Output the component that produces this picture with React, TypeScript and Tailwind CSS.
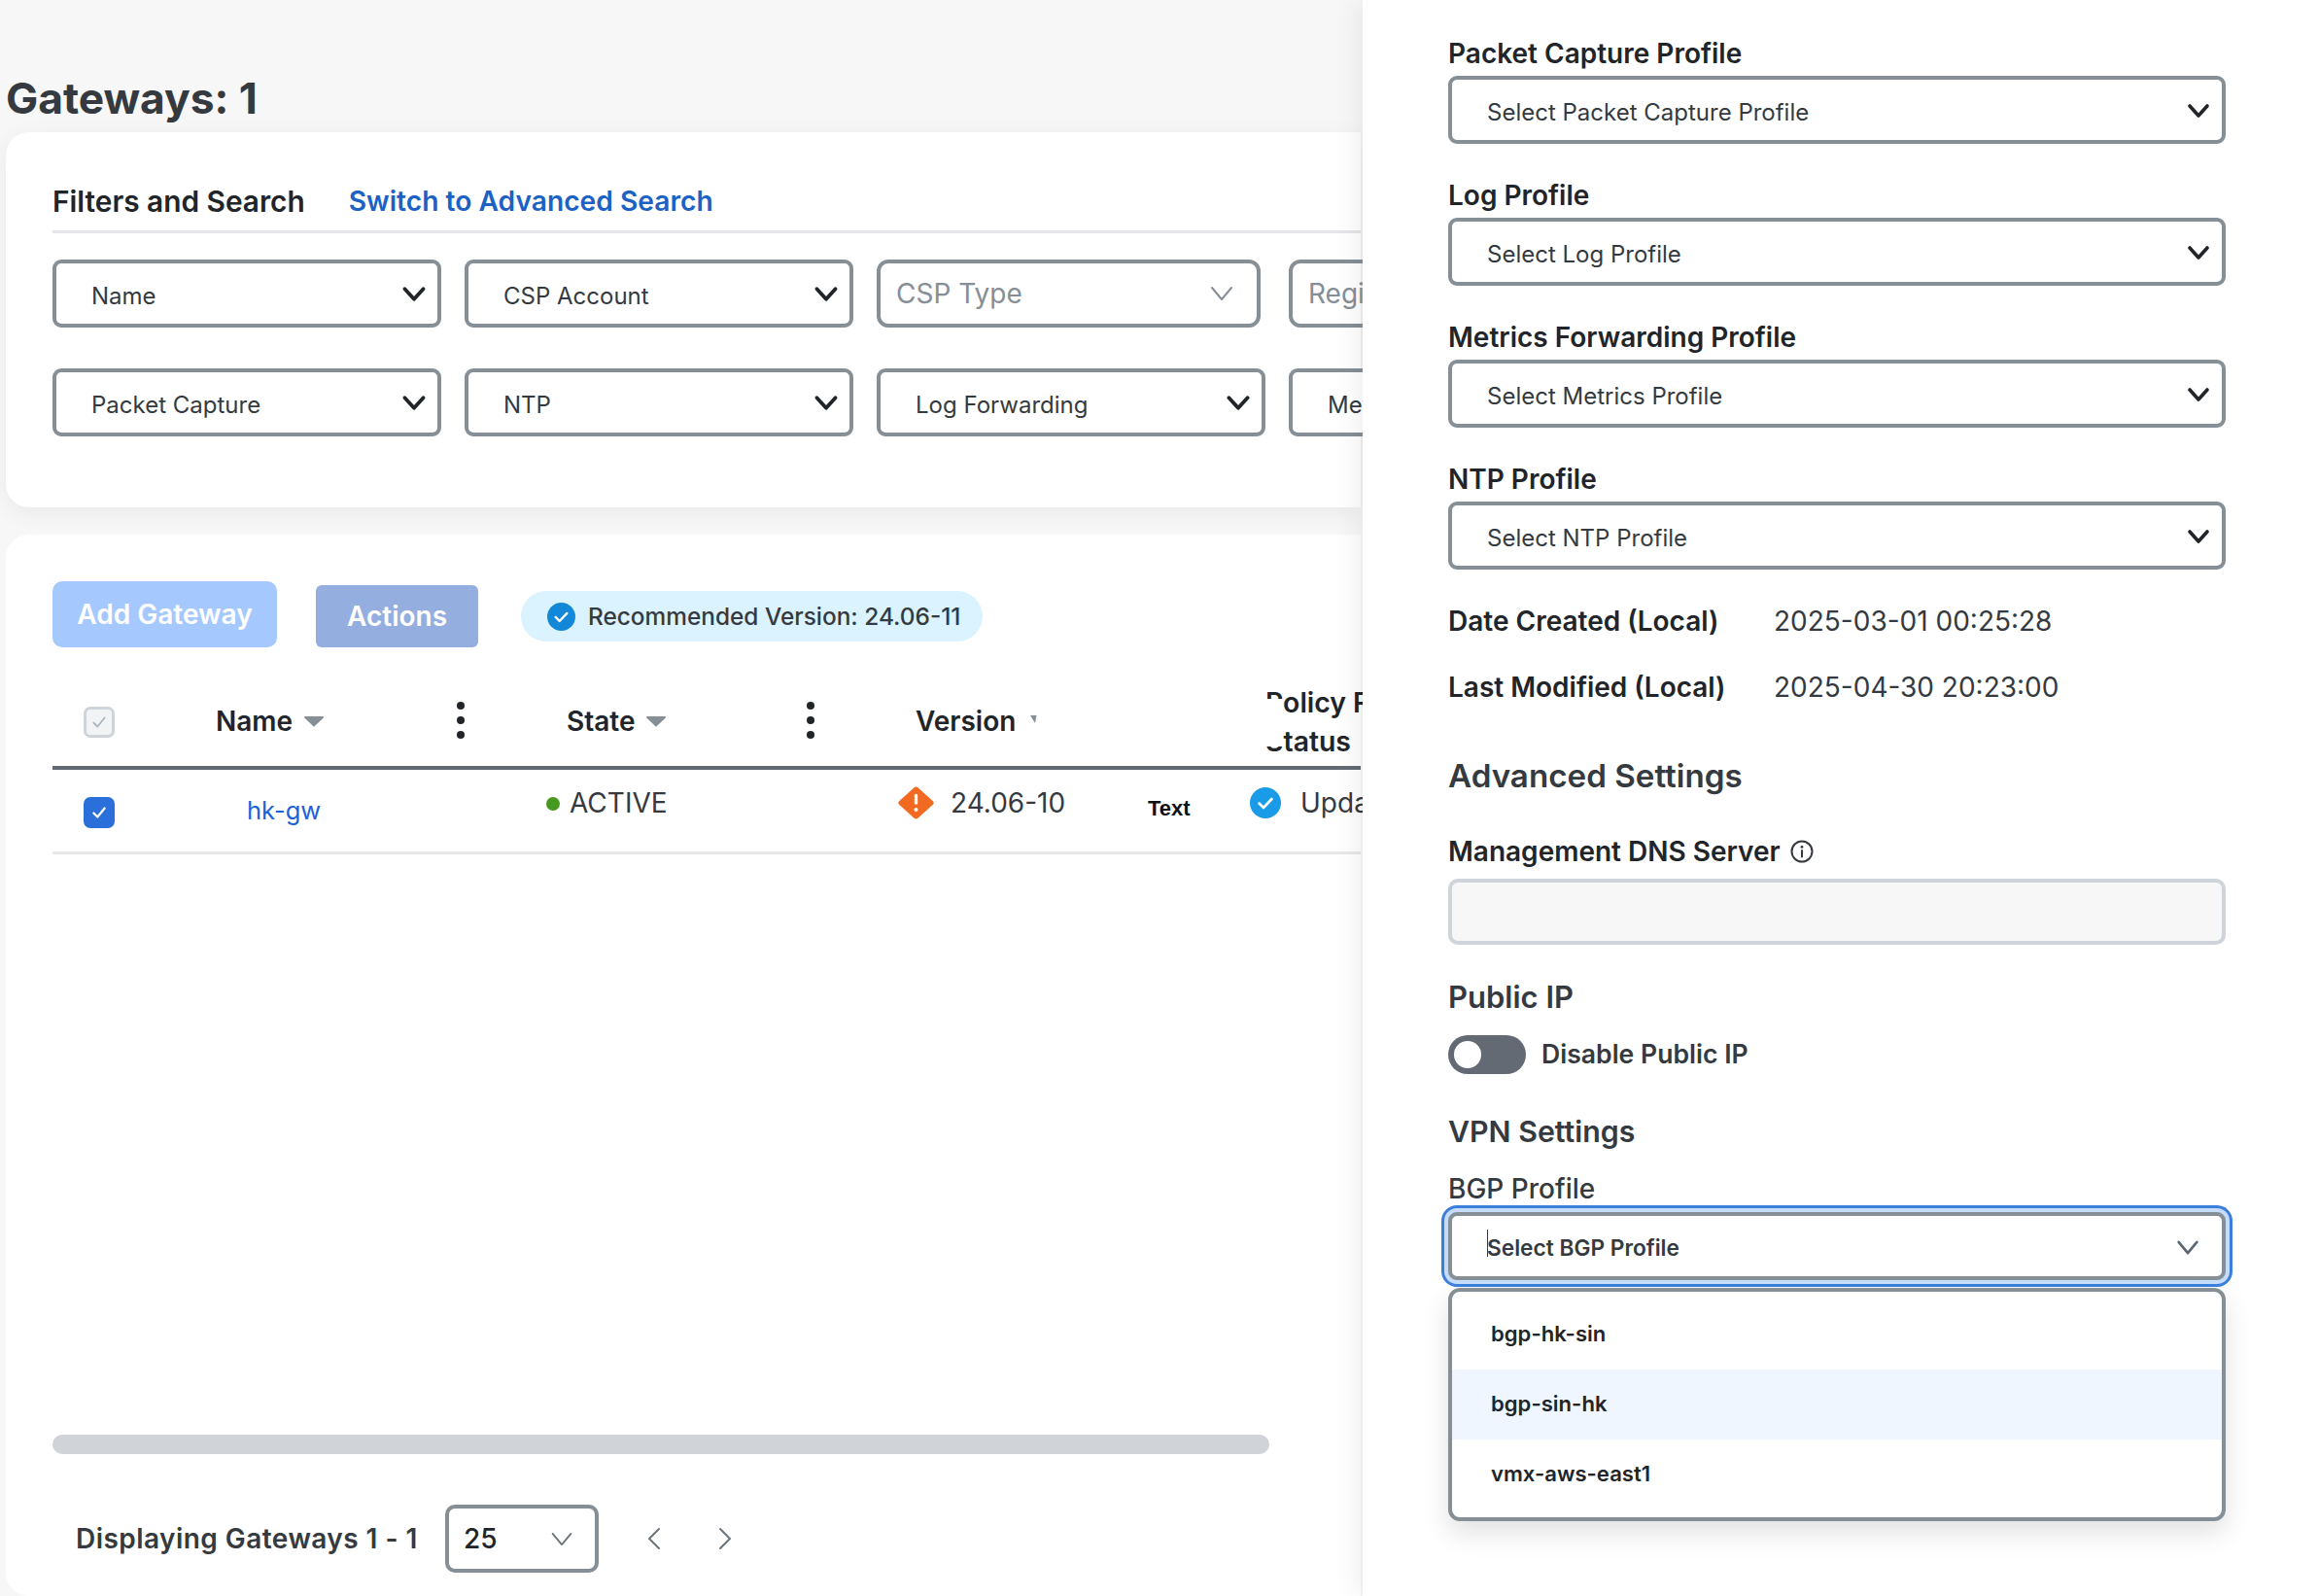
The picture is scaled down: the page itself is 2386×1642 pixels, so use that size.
import React from 'react';

const inter = { fontFamily: 'Inter, "Liberation Sans", sans-serif' };

// Thick dark chevron used on the enabled selects
const Chevron = ({ className = '' }: { className?: string }) => (
  <svg viewBox="0 0 24 16" fill="none" className={className}>
    <path d="M3 3l9 10 9-10" stroke="currentColor" strokeWidth="3.6" strokeLinecap="round" strokeLinejoin="round" />
  </svg>
);

const ThinChevron = ({ className = '', weight = 2 }: { className?: string; weight?: number }) => (
  <svg viewBox="0 0 24 16" fill="none" className={className}>
    <path d="M2 2l10 12L22 2" stroke="currentColor" strokeWidth={weight} strokeLinecap="round" strokeLinejoin="round" />
  </svg>
);

const Caret = ({ className = '' }: { className?: string }) => (
  <svg viewBox="0 0 20 12" className={className}>
    <path d="M1 1h18a1 1 0 0 1 .8 1.5L10.8 11a1 1 0 0 1-1.6 0L.2 2.5A1 1 0 0 1 1 1z" fill="#868e96" />
  </svg>
);

const Kebab = () => (
  <div className="flex flex-col gap-[7px] shrink-0">
    <span className="w-2 h-2 rounded-full bg-[#212529]" />
    <span className="w-2 h-2 rounded-full bg-[#212529]" />
    <span className="w-2 h-2 rounded-full bg-[#212529]" />
  </div>
);

const CheckCircle = ({ className = '', color }: { className?: string; color: string }) => (
  <svg viewBox="0 0 32 32" className={className}>
    <circle cx="16" cy="16" r="16" fill={color} />
    <path d="M9.5 16.5l4.5 4.5 8.5-9" fill="none" stroke="#fff" strokeWidth="2.6" strokeLinecap="round" strokeLinejoin="round" />
  </svg>
);

const FilterSelect = ({ label, className = '' }: { label: string; className?: string }) => (
  <div className={`h-[70px] shrink-0 border-4 border-[#868e96] rounded-[9px] bg-white flex items-center justify-between pl-[36px] pr-[11px] text-[24px] text-[#343a40] ${className}`}>
    <span className="pt-[6px] whitespace-nowrap">{label}</span>
    <Chevron className="mt-[1px] w-[26px] h-[17px] text-[#212529]" />
  </div>
);

const ProfileField = ({ label, placeholder }: { label: string; placeholder: string }) => (
  <div className="flex flex-col">
    <label className="h-[34px] flex items-center text-[28px] font-semibold text-[#212529]">{label}</label>
    <div className="mt-[6px] h-[70px] border-4 border-[#868e96] rounded-[9px] flex items-center justify-between pl-[36px] pr-[12px] text-[24px] text-[#343a40]">
      <span className="pt-[6px]">{placeholder}</span>
      <Chevron className="mt-[1px] w-[24px] h-[16px] text-[#212529]" />
    </div>
  </div>
);

const bgpOptions = ['bgp-hk-sin', 'bgp-sin-hk', 'vmx-aws-east1'];

export default function App() {
  return (
    <div className="relative w-full h-[1642px] overflow-hidden bg-[#f7f7f7]" style={inter}>
      {/* Gateways list */}
      <div className="w-[1400px] pl-[6px]">
        <h1 className="pt-[76px] h-[136px] text-[44.3px] leading-[50px] font-bold text-[#343a40] whitespace-nowrap">Gateways: 1</h1>

        <section className="h-[386px] bg-white rounded-l-[24px] pl-[48px] pt-[50px] shadow-[0_6px_24px_rgba(0,0,0,0.06)]">
          <div className="h-[54px] flex items-start gap-[45px] pt-[3px] border-b-[3px] border-[#e3e5e8]">
            <h2 className="text-[29.8px] leading-[36px] font-semibold text-[#212529] whitespace-nowrap">Filters and Search</h2>
            <a className="text-[28.2px] leading-[36px] font-semibold text-[#1c62c4] whitespace-nowrap">Switch to Advanced Search</a>
          </div>
          <div className="mt-[27px] flex gap-[24px]">
            <FilterSelect label="Name" className="w-[400px]" />
            <FilterSelect label="CSP Account" className="w-[400px]" />
            <div className="w-[395px] h-[70px] shrink-0 border-4 border-[#868e96] rounded-[12px] flex items-center justify-between pl-[16px] pr-[24px] text-[28px] text-[#868e96]">
              <span>CSP Type</span>
              <ThinChevron className="w-[24px] h-[16px]" />
            </div>
            <div className="ml-[5px] w-[200px] h-[70px] shrink-0 border-4 border-[#868e96] rounded-[12px] flex items-center pl-[16px] text-[28px] text-[#868e96]">
              <span>Region</span>
            </div>
          </div>
          <div className="mt-[42px] flex gap-[24px]">
            <FilterSelect label="Packet Capture" className="w-[400px]" />
            <FilterSelect label="NTP" className="w-[400px]" />
            <FilterSelect label="Log Forwarding" className="w-[400px]" />
            <FilterSelect label="Metrics" className="w-[200px]" />
          </div>
        </section>

        <section className="mt-[28px] h-[1092px] bg-white rounded-l-[24px] pl-[48px] relative">
          {/* Toolbar */}
          <div className="pt-[48px] flex items-end">
            <button className="w-[231px] h-[68px] rounded-[10px] bg-[#a5c9ff] text-white text-[28px] font-semibold">Add Gateway</button>
            <button className="ml-[40px] w-[167px] h-[64px] rounded-[6px] bg-[#94aee0] text-white text-[28px] font-semibold">Actions</button>
            <div className="ml-[44px] mb-[6px] w-[475px] h-[52px] rounded-full bg-[#dbf3ff] flex items-center pl-[27px] gap-[13px]">
              <CheckCircle className="w-[29px] h-[29px]" color="#1488d8" />
              <span className="text-[24.4px] font-medium text-[#343a40] whitespace-nowrap">Recommended Version: 24.06-11</span>
            </div>
          </div>

          {/* Table */}
          <div className="mt-[28px] h-[98px] flex items-center border-b-4 border-[#636a73]">
            <div className="ml-[32px] mt-[3px] w-[32px] h-[32px] rounded-[7px] bg-[#f1f3f5] border-[3px] border-[#ced4da] flex items-center justify-center shrink-0">
              <svg viewBox="0 0 16 16" className="w-[18px] h-[18px]" fill="none">
                <path d="M3 8.5l3.5 3.5L13 4" stroke="#adb5bd" strokeWidth="1.6" strokeLinecap="round" strokeLinejoin="round" />
              </svg>
            </div>
            <div className="ml-[104px] mt-[2px] w-[248px] shrink-0 flex items-center text-[28px] font-semibold text-[#212529]">
              Name<Caret className="ml-[12px] w-[20px] h-[12px]" />
            </div>
            <Kebab />
            <div className="ml-[105px] mt-[2px] w-[247px] shrink-0 flex items-center text-[28px] font-semibold text-[#212529]">
              State<Caret className="ml-[12px] w-[20px] h-[12px]" />
            </div>
            <Kebab />
            <div className="ml-[104px] mt-[2px] w-[118px] shrink-0 text-[28px] font-semibold text-[#212529]">Version</div>
            <svg viewBox="0 0 7 9" className="w-[7px] h-[9px] shrink-0 -mt-[2px]">
              <path d="M0 0h6.5L5 8z" fill="#868e96" />
            </svg>
            <div className="ml-[235px] mt-[4px] shrink-0 text-[28.4px] leading-[40px] font-semibold text-[#212529] whitespace-nowrap relative">
              <div>Policy R</div>
              <div>Status</div>
              <span className="absolute -left-[4px] top-[16px] w-[22px] h-[49px] bg-white" />
            </div>
          </div>
          <div className="h-[87px] flex items-center border-b-[3px] border-[#e6e8ea]">
            <div className="ml-[32px] w-[32px] h-[32px] rounded-[7px] bg-[#2b6fdb] flex items-center justify-center shrink-0 mt-[3px]">
              <svg viewBox="0 0 16 16" className="w-[18px] h-[18px]" fill="none">
                <path d="M3 8.5l3.5 3.5L13 4" stroke="#fff" strokeWidth="2" strokeLinecap="round" strokeLinejoin="round" />
              </svg>
            </div>
            <a className="ml-[136px] w-[308px] shrink-0 text-[25.5px] text-[#1c62d9]">hk-gw</a>
            <div className="w-[362px] shrink-0 flex items-center -mt-[16px]">
              <span className="w-[14px] h-[14px] rounded-full bg-[#479a1f] mt-[2px]" />
              <span className="ml-[10px] text-[28px] text-[#343a40]">ACTIVE</span>
            </div>
            <svg viewBox="0 0 40 36" className="w-[37px] h-[36px] shrink-0 -mt-[16px]">
              <path d="M17.6 1.2a3.2 3.2 0 0 1 4.8 0L38.8 16a3 3 0 0 1 0 4L22.4 34.8a3.2 3.2 0 0 1-4.8 0L1.2 20a3 3 0 0 1 0-4z" fill="#f26a21" />
              <rect x="18.2" y="8" width="3.6" height="12" rx="1.6" fill="#fff" />
              <circle cx="20" cy="25.5" r="2.2" fill="#fff" />
            </svg>
            <span className="ml-[17px] w-[203px] shrink-0 text-[28px] text-[#343a40] -mt-[16px]">24.06-10</span>
            <span className="w-[105px] shrink-0 text-[22px] font-bold text-[#111] -mt-[6px]" style={{ fontFamily: '"Liberation Sans", sans-serif' }}>Text</span>
            <CheckCircle className="w-[32px] h-[32px] shrink-0 -mt-[16px]" color="#1a9be8" />
            <span className="ml-[20px] text-[28px] text-[#343a40] -mt-[16px]">Updated</span>
          </div>

          {/* Scrollbar + pagination sit at the foot of the card */}
          <div className="absolute left-[48px] top-[926px] w-[1252px] h-[20px] rounded-full bg-[#d0d3d8]" />
          <div className="absolute left-[72px] top-[998px] h-[70px] flex items-center">
            <span className="w-[380px] text-[28px] font-semibold tracking-[0.45px] text-[#343a40] whitespace-nowrap">Displaying Gateways 1 - 1</span>
            <div className="w-[158px] h-[70px] border-4 border-[#868e96] rounded-[10px] flex items-center justify-between pl-[15px] pr-[22px] text-[28px] font-medium text-[#212529]">
              25
              <ThinChevron className="w-[24px] h-[15px] text-[#6c757d]" />
            </div>
            <svg viewBox="0 0 14 24" className="ml-[50px] w-[14px] h-[24px]" fill="none">
              <path d="M12 2L2 12l10 10" stroke="#6c757d" strokeWidth="2" strokeLinecap="round" strokeLinejoin="round" />
            </svg>
            <svg viewBox="0 0 14 24" className="ml-[59px] w-[14px] h-[24px]" fill="none">
              <path d="M2 2l10 10L2 22" stroke="#6c757d" strokeWidth="2" strokeLinecap="round" strokeLinejoin="round" />
            </svg>
          </div>
        </section>
      </div>

      {/* Side drawer */}
      <aside className="absolute top-0 right-0 bottom-0 w-[984px] bg-white pl-[88px] pr-[96px] pt-[38px] shadow-[-8px_0_24px_rgba(0,0,0,0.06)]">
        <div className="flex flex-col gap-[36px]">
          <ProfileField label="Packet Capture Profile" placeholder="Select Packet Capture Profile" />
          <ProfileField label="Log Profile" placeholder="Select Log Profile" />
          <ProfileField label="Metrics Forwarding Profile" placeholder="Select Metrics Profile" />
          <ProfileField label="NTP Profile" placeholder="Select NTP Profile" />
        </div>

        <div className="mt-[36px] h-[34px] flex items-center text-[28px]">
          <span className="w-[335px] font-semibold text-[#212529]">Date Created (Local)</span>
          <span className="text-[#343a40]">2025-03-01 00:25:28</span>
        </div>
        <div className="mt-[34px] h-[34px] flex items-center text-[28px]">
          <span className="w-[335px] font-semibold text-[#212529]">Last Modified (Local)</span>
          <span className="text-[#343a40]">2025-04-30 20:23:00</span>
        </div>

        <h3 className="mt-[55px] h-[40px] flex items-center text-[33.2px] font-semibold text-[#343a40]">Advanced Settings</h3>

        <div className="mt-[40px] h-[34px] flex items-center text-[28px] font-semibold text-[#212529]">
          Management DNS Server
          <svg viewBox="0 0 24 24" className="ml-[10px] w-[24px] h-[24px]" fill="none">
            <circle cx="12" cy="12" r="10.5" stroke="#343a40" strokeWidth="2" />
            <path d="M12 11v6.5" stroke="#343a40" strokeWidth="2" strokeLinecap="round" />
            <circle cx="12" cy="7.4" r="1.4" fill="#343a40" />
          </svg>
        </div>
        <div className="mt-[11px] h-[68px] border-4 border-[#ced4da] rounded-[10px] bg-[#f7f7f7]" />

        <h3 className="mt-[34px] h-[40px] flex items-center text-[31px] font-semibold text-[#343a40]">Public IP</h3>
        <div className="mt-[19px] h-[40px] flex items-center">
          <div className="w-[80px] h-[40px] rounded-full bg-[#636a73] flex items-center pl-[6px]">
            <span className="w-[28px] h-[28px] rounded-full bg-white" />
          </div>
          <span className="ml-[16px] text-[26.6px] font-semibold text-[#343a40]">Disable Public IP</span>
        </div>

        <h3 className="mt-[40px] h-[40px] flex items-center text-[30.3px] font-semibold text-[#343a40]">VPN Settings</h3>
        <label className="mt-[21px] h-[34px] flex items-center text-[28px] font-medium text-[#343a40]">BGP Profile</label>

        <div className="relative mt-[7px] h-[70px] border-4 border-[#868e96] rounded-[9px] flex items-center justify-between pl-[36px] pr-[23px] text-[22.7px] font-semibold text-[#343a40] shadow-[0_0_0_4px_#c5dcfb,0_0_0_7px_#3c7fdb]">
          <span className="relative pt-[5px]">
            Select BGP Profile
            <span className="absolute left-[0px] top-[3px] w-[1px] h-[28px] bg-[#343a40]" />
          </span>
          <ThinChevron className="mt-[3px] w-[24px] h-[15px] text-[#5c6670]" weight={2.8} />
        </div>
        {/* Open BGP menu */}
        <div className="mt-[8px] h-[240px] border-4 border-[#868e96] rounded-[12px] bg-white py-[8px] shadow-[0_12px_28px_rgba(0,0,0,0.12)]">
          {bgpOptions.map((option, i) => (
            <div key={option} className={`h-[72px] flex items-center pl-[40px] text-[22.1px] font-semibold text-[#212529] ${i === 1 ? 'bg-[#eff6ff]' : ''}`}>
              {option}
            </div>
          ))}
        </div>
      </aside>
    </div>
  );
}
